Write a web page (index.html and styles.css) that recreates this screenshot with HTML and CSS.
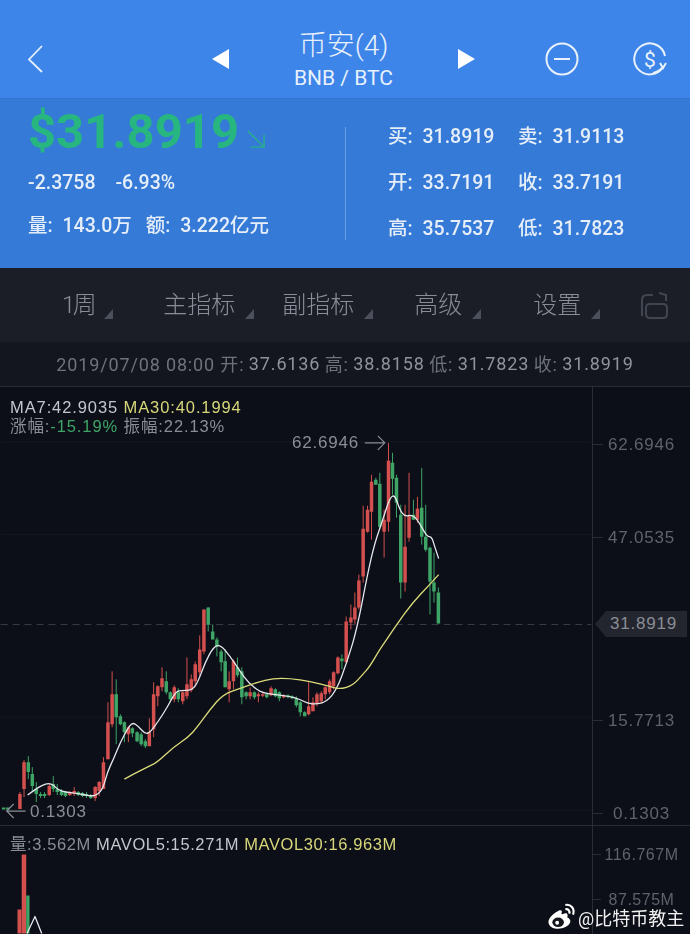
FILE: index.html
```html
<!DOCTYPE html>
<html lang="zh">
<head>
<meta charset="utf-8">
<title>BNB / BTC</title>
<link rel="stylesheet" href="styles.css">
</head>
<body>
<div class="page">
  <header class="topbar">
    <svg class="icon-back" viewBox="0 0 16 28"><path d="M15 1 2 14.500 15 27"/></svg>
    <svg class="tri" viewBox="0 0 18 22"><path d="M18 1V21L1 11Z"/></svg>
    <div class="title">
      <div class="title-cn">币安(4)</div>
      <div class="title-en">BNB / BTC</div>
    </div>
    <svg class="tri" viewBox="0 0 18 22"><path d="M0 1V21L17 11Z"/></svg>
    <svg class="icon-round" viewBox="0 0 34 34"><circle cx="17" cy="17" r="15.500"/><path d="M9 17H25"/></svg>
    <svg class="icon-round" viewBox="0 0 34 34"><path d="M30 25A15.500 15.500 0 1 1 32 14"/><path d="M20 31A15.500 15.500 0 0 0 29 26"/><path d="M27 21 30 26 33 21"/><text x="17" y="24.500" class="dollar">$</text></svg>
  </header>

  <section class="stats">
    <div class="stats-left">
      <div class="price">$31.8919<svg class="price-arrow" viewBox="0 0 20 20"><path d="M1 1 19 19M19 5V19H4"/></svg></div>
      <div class="change"><span>-2.3758</span><span>-6.93%</span></div>
      <div class="volume"><span>量: 143.0万</span><span>额: 3.222亿元</span></div>
    </div>
    <div class="stats-divider"></div>
    <div class="stats-right">
      <span>买: 31.8919</span><span>卖: 31.9113</span>
      <span>开: 33.7191</span><span>收: 33.7191</span>
      <span>高: 35.7537</span><span>低: 31.7823</span>
    </div>
  </section>

  <nav class="toolbar">
    <div class="tool t1">1周</div>
    <div class="tool t2">主指标</div>
    <div class="tool t3">副指标</div>
    <div class="tool t4">高级</div>
    <div class="tool t5">设置</div>
    <svg class="lock" viewBox="0 0 30 28"><path d="M3 24V8Q3 3 8 3H14M9 26H24Q28 26 28 22V16Q28 12 24 12H11Q7 12 7 16V22Q7 26 11 26M20 1 27 3V9"/></svg>
  </nav>

  <div class="datestrip">2019/07/08 08:00 开: <b>37.6136</b> 高: <b>38.8158</b> 低: <b>31.7823</b> 收: <b>31.8919</b></div>

  <section class="panel panel-price">
    <div class="plot">
      <svg class="chart" viewBox="0 387 592 439">
        <path class="grid" d="M0 442H592M0 535H592M0 718H592M0 811H592"/>
        <path class="dash" d="M0 625H592"/>
        <path class="wick red" d="M19.300 793V810M23.400 761V798M48.700 785V797M69.300 792V797M73.700 788V797M94.700 787V802M98.700 782V797M103 758V790M107.500 703V760M111.700 672V728M128 727V743M149 719V747M153.300 683V738M157.500 686V707M161.700 668V692M174 686V703M182.500 692V705M186.700 658V700M191 675V693M195 662V687M199.500 636V677M203.700 610V655M229 672V703M233.300 660V690M250 688V700M258.300 693V703M262.700 693V698M271 687V697M283.700 695V699M308.700 683V716M313 698V712M317 693V707M321.300 692V704M325.300 687V700M329.700 680V695M333.700 672V690M338 657V675M346.300 617V663M351 605V630M355 593V625M359 575V610M363.300 506V583M367.700 506V533M371.700 475V540M384.300 510V558M388.700 443V532M405.300 505V592M409.300 473V542M417.700 497V523"/>
        <path class="body red" d="M19.300 795V810M23.400 763V790M48.700 787V796M69.300 793V796M73.700 792V795M94.700 788V799M98.700 783V792M103 763V790M107.500 723V760M111.700 695V725M128 728V735M149 733V747M153.300 695V730M157.500 687V697M161.700 679V688M174 688V700M182.500 693V702M186.700 685V697M191 680V691M195 665V682M199.500 650V673M203.700 610V652M229 682V690M233.300 662V682M250 693V697M258.300 695V697M262.700 695V696.500M271 689V696M283.700 696V698M308.700 707V715M313 703V712M317 695V704M321.300 694V702M325.300 688V695M329.700 682V693M333.700 673V687M338 658V674M346.300 622V663M351 618V623M355 608V620M359 581V608M363.300 529V577M367.700 510V532M371.700 482V512M384.300 520V532M388.700 461V522M405.300 547V583M409.300 516V538M417.700 509V520"/>
        <path class="wick green" d="M27.700 757V780M31.700 768V793M35.700 783V803M40 793V799M44 793V799M52.700 777V793M56.700 785V796M61 790V797M65 792V798M77.700 792V797M82 793V798M86 793V799M90.300 795V800M115.800 680V745M120 715V726M124 722V743M132 728V738M136.700 732V743M140.800 733V747M145 740V749M166 672V695M170 692V703M178 689V703M208 608V632M212.500 625V640M216.700 638V657M221 650V672M225 650V688M237.300 658V678M241.700 668V705M246 692V700M254.300 692V700M266.700 693V699M275.300 689V698M279.300 692V702M288 695V699M292 696V700M296.300 697V708M300.300 702V717M304.700 712V717M342 655V670M376 478V485M380 473V530M392.700 453V495M396.700 475V518M401 505V599M413.700 500V520M422 468V545M426 505V552M430.300 547V615M434.300 553V603M438.700 588V624"/>
        <path class="body green" d="M3 808.500V810.500M7.200 808.500V810.500M27.700 763V773M31.700 775V787M35.700 790V795M40 795V797M44 795V797M52.700 785V790M56.700 790V793M61 792V796M65 793V797M77.700 793V796M82 794V797M86 795V797M90.300 796V799M115.800 695V718M120 717V725M124 723V733M132 729V734M136.700 733V742M140.800 735V745M145 742V747M166 682V693M170 693V700M178 693V700M208 608V625M212.500 632V640M216.700 640V647M221 652V663M225 662V688M237.300 668V676M241.700 672V698M246 693V697M254.300 693V698M266.700 695V698M275.300 690V697M279.300 693V699M288 696V698M292 697V699M296.300 699V706M300.300 703V713M304.700 713V717M342 659V662M376 480V485M380 484V527M392.700 463V479M396.700 478V503M401 515V583M413.700 515V520M422 508V537M426 537V550M430.300 548V582M434.300 583V592M438.700 593V624"/>
        <path class="line ma7" d="M27 796Q35 790 38.500 788Q42 786 45 785Q48 784 50.500 785Q53 786 55.500 788.500Q58 791 61.500 792Q65 793 70 793.500Q75 794 80 795Q85 796 88.500 796.500Q92 797 95 796Q98 795 100.500 791.500Q103 788 105 780.500Q107 773 110 766.500Q113 760 116.500 751.500Q120 743 123.500 736.500Q127 730 129.500 726.500Q132 723 135 725Q138 727 141.500 731Q145 735 147.500 734Q150 733 154 727.500Q158 722 162.500 715Q167 708 171 700.500Q175 693 177.500 692Q180 691 186 691Q192 691 195 686.500Q198 682 201.500 672.500Q205 663 209 655.500Q213 648 216.500 646.500Q220 645 225 651Q230 657 235 664.500Q240 672 244 677.500Q248 683 254 688Q260 693 266.500 694Q273 695 281.500 696Q290 697 295 698.500Q300 700 303.500 702Q307 704 312 704.500Q317 705 322 703.500Q327 702 332 696Q337 690 342 676.500Q347 663 352 646.500Q357 630 362.500 601.500Q368 573 371.500 558Q375 543 379 531.500Q383 520 386.500 509Q390 498 392.500 496.500Q395 495 397.500 502.500Q400 510 402.500 513.500Q405 517 408.500 516Q412 515 415 517.500Q418 520 422.500 528.500Q427 537 429.500 537Q432 537 433.500 542Q435 547 439 559"/>
        <path class="line ma30" d="M124 780Q133 775 140 771.500Q147 768 152 765.500Q157 763 165 755.500Q173 748 180.500 743Q188 738 192.500 733Q197 728 203.500 719Q210 710 216.500 702.500Q223 695 231.500 692Q240 689 248.500 686Q257 683 265 681Q273 679 281.500 679Q290 679 300 680.500Q310 682 320 684.500Q330 687 335 688.500Q340 690 346.500 688Q353 686 358 680.500Q363 675 366.500 671Q370 667 375 658.500Q380 650 383.500 645Q387 640 392 632.500Q397 625 405 614Q413 603 421.500 594Q430 585 439 575"/>
        <path class="marker" d="M365 443H385M378 436 385 443 378 450"/>
        <path class="marker" d="M25 812H6M13 805 6 812 13 819"/>
      </svg>
      <div class="legend">
        <div><span class="c-white">MA7:42.9035</span> <span class="c-yellow">MA30:40.1994</span></div>
        <div><span class="c-grey">涨幅:</span><span class="c-green">-15.19%</span> <span class="c-grey">振幅:22.13%</span></div>
      </div>
      <span class="mark mark-high">62.6946</span>
      <span class="mark mark-low">0.1303</span>
    </div>
    <div class="axis axis-price">
      <span class="tick">62.6946</span><span class="tick">47.0535</span><span class="tick tick-gap">15.7713</span><span class="tick">0.1303</span>
      <div class="price-tag">31.8919</div>
    </div>
  </section>

  <section class="panel panel-volume">
    <div class="plot">
      <svg class="chart" viewBox="0 827 592 107">
        <rect class="vol-red" x="17.500" y="910" width="4" height="24"/>
        <rect class="vol-red" x="21.700" y="855" width="4.500" height="79"/>
        <rect class="vol-green" x="26.200" y="896" width="3.300" height="38"/>
        <path class="line ma7" d="M27 934 35 917 41.700 934"/>
      </svg>
      <div class="legend legend-vol"><span class="c-grey">量:3.562M</span> <span class="c-white">MAVOL5:15.271M</span> <span class="c-yellow">MAVOL30:16.963M</span></div>
    </div>
    <div class="axis axis-volume"><span class="tick">116.767M</span><span class="tick">87.575M</span></div>
  </section>

  <div class="watermark">
    <svg class="weibo" viewBox="0 0 30 28"><path class="w-body" d="M12 8C4 12 0 18 2 22 4 27 13 28 19 25 25 22 26 17 21 15 22 12 21 10 18 11 16 12 15 12 15 11 16 8 15 7 12 8Z"/><ellipse class="w-eye" cx="11.500" cy="20" rx="6" ry="5"/><circle class="w-body" cx="10.500" cy="20.500" r="2"/><path class="w-arc" d="M19 2C25 1 29 6 27 12M19 6.500C22 6 24 8 23 11"/></svg>
    <span>@比特币教主</span>
  </div>
</div>
</body>
</html>
```
FILE: styles.css
```css
* { box-sizing: border-box; }
html, body { margin: 0; padding: 0; }
body { background: #0c0f17; font-family: "Liberation Sans", "Noto Sans CJK SC", sans-serif; }
.page { position: relative; width: 690px; height: 934px; overflow: hidden; display: flex; flex-direction: column; filter: blur(0.4px); }

.topbar { height: 98px; flex: none; background: #3d85e9; color: #fff; display: grid; grid-template-columns: 16px 168px 18px 229px 18px 69px 34px 54px 34px; padding-left: 27px; align-items: center; }
.topbar > :nth-child(1) { grid-column: 1; }
.topbar > :nth-child(2) { grid-column: 3; }
.topbar > :nth-child(3) { grid-column: 4; }
.topbar > :nth-child(4) { grid-column: 5; }
.topbar > :nth-child(5) { grid-column: 7; }
.topbar > :nth-child(6) { grid-column: 9; }
.topbar svg { margin-top: 20px; }
.icon-back { width: 16px; height: 28px; fill: none; stroke: #e6f0fc; stroke-width: 1.800; }
.tri { width: 18px; height: 22px; fill: #fff; }
.title { text-align: center; font-family: Roboto, "Noto Sans CJK SC", sans-serif; margin-top: 23px; color: #e8f1fc; white-space: nowrap; }
.title-cn { font-size: 28px; line-height: 30px; font-weight: 300; }
.title-en { font-size: 21px; line-height: 24px; font-weight: 400; margin-top: 5px; }
.icon-round { width: 34px; height: 34px; fill: none; stroke: #e8f1fc; stroke-width: 2; }
.dollar { font: 400 21px Roboto, sans-serif; fill: #e8f1fc; stroke: none; text-anchor: middle; }

.stats { height: 170px; flex: none; background: #357ad6; border-top: 1px solid #3574cb; color: #e6eef9; display: flex; font-family: Roboto, "Noto Sans CJK SC", sans-serif; font-weight: 500; font-size: 19.500px; word-spacing: 5px; }
.stats-left { width: 345px; padding: 2px 0 0 28px; }
.price { font-size: 49px; line-height: 62px; font-weight: 700; color: #27b67f; display: flex; align-items: flex-end; }
.price-arrow { width: 18px; height: 18px; margin: 0 0 15px 8px; fill: none; stroke: #27b08a; stroke-width: 1.500; }
.change { display: flex; gap: 20px; margin-top: 6px; line-height: 28px; }
.volume { display: flex; gap: 14px; margin-top: 15px; line-height: 28px; }
.stats-divider { width: 1px; height: 113px; margin-top: 28px; background: #6b9fe2; flex: none; }
.stats-right { margin: 12px 0 0 42px; display: grid; grid-template-columns: 130px 130px; grid-auto-rows: 46px; align-items: center; align-content: start; white-space: nowrap; }

.toolbar { height: 74px; flex: none; background: #1b1e27; position: relative; display: flex; align-items: center; padding-left: 62px; font-size: 24px; color: #898d97; font-family: Roboto, "Noto Sans CJK SC", sans-serif; font-weight: 300; }
.tool { position: relative; line-height: 30px; white-space: nowrap; }
.tool::after { content: ""; position: absolute; right: -19px; bottom: 1px; border-style: solid; border-width: 0 0 10px 9px; border-color: transparent transparent #4c505b transparent; }
.t1 { letter-spacing: -2.500px; }
.t2 { margin-left: 69px; }
.t3 { margin-left: 47px; }
.t4 { margin-left: 60px; }
.t5 { margin-left: 71px; }
.lock { position: absolute; left: 639px; top: 24px; width: 30px; height: 28px; fill: none; stroke: #41454f; stroke-width: 2; }

.datestrip { height: 45px; flex: none; background: #13161e; border-bottom: 1px solid #2a2d36; display: flex; align-items: center; justify-content: center; gap: 4.500px; padding-bottom: 2px; font-size: 18px; letter-spacing: 0.850px; color: #6e727c; font-family: Roboto, "Noto Sans CJK SC", sans-serif; white-space: nowrap; }
.datestrip b { font-weight: 400; color: #8f939c; }

.panel { display: flex; flex: none; position: relative; }
.panel-price { height: 439px; border-bottom: 1px solid #2a2d36; }
.panel-volume { flex: 1; }
.plot { width: 592px; position: relative; flex: none; }
.chart { position: absolute; left: 0; top: 0; width: 592px; height: 100%; }
.grid { stroke: #15181f; stroke-width: 1; fill: none; }
.dash { stroke: #3a3d46; stroke-width: 1; stroke-dasharray: 7 5; fill: none; }
.wick { stroke-width: 1; fill: none; }
.body { stroke-width: 3.500; fill: none; }
.red { stroke: #d4504f; }
.green { stroke: #3ea567; }
.vol-red { fill: #d4504f; }
.vol-green { fill: #3ea567; }
.line { fill: none; stroke-width: 1.300; stroke-linejoin: round; }
.ma7 { stroke: #e6e8ee; }
.ma30 { stroke: #dcdc7a; }
.marker { fill: none; stroke: #8a8d95; stroke-width: 1.200; }
.legend { position: relative; padding: 11px 0 0 10px; font-size: 16.500px; letter-spacing: 0.900px; line-height: 19px; white-space: nowrap; }
.legend-vol { padding-top: 9px; letter-spacing: 0.600px; }
.c-white { color: #c3c6cc; }
.c-yellow { color: #d8d77a; }
.c-grey { color: #8a8d95; }
.c-green { color: #3ea567; }
.mark { position: absolute; color: #8a8d95; font-size: 17px; letter-spacing: 0.800px; line-height: 20px; }
.mark-high { left: 292px; top: 46px; }
.mark-low { left: 30px; top: 415px; }

.axis { flex: 1; border-left: 1px solid #2a2d36; display: flex; flex-direction: column; align-items: center; color: #5f626c; font-size: 17px; letter-spacing: 0.800px; line-height: 20px; position: relative; }
.axis-price { gap: 73px; padding-top: 48px; }
.axis-volume { gap: 25px; padding-top: 19px; font-size: 16px; letter-spacing: 0.500px; }
.tick-gap { margin-top: 90px; }
.price-tag { position: absolute; left: 2px; top: 224px; width: 92px; height: 26px; background: #23262f; color: #8a8d95; line-height: 26px; padding-left: 15px; clip-path: polygon(0 50%, 11px 0, 100% 0, 100% 100%, 11px 100%); }
.axis-price .tick::before { content: ""; position: absolute; left: 0; width: 10px; height: 1px; margin-top: 9px; background: #2a2d36; }
.axis-volume .tick::before { content: ""; position: absolute; left: 0; width: 8px; height: 1px; margin-top: 9px; background: #2a2d36; }

.watermark { position: absolute; left: 547px; top: 903px; display: flex; align-items: center; gap: 2px; color: #f2f2f2; font-size: 18px; font-family: Roboto, "Noto Sans CJK SC", sans-serif; white-space: nowrap; }
.weibo { width: 29px; height: 27px; }
.w-body { fill: #fff; }
.w-eye { fill: #14161c; }
.w-arc { fill: none; stroke: #fff; stroke-width: 2.200; }
```
